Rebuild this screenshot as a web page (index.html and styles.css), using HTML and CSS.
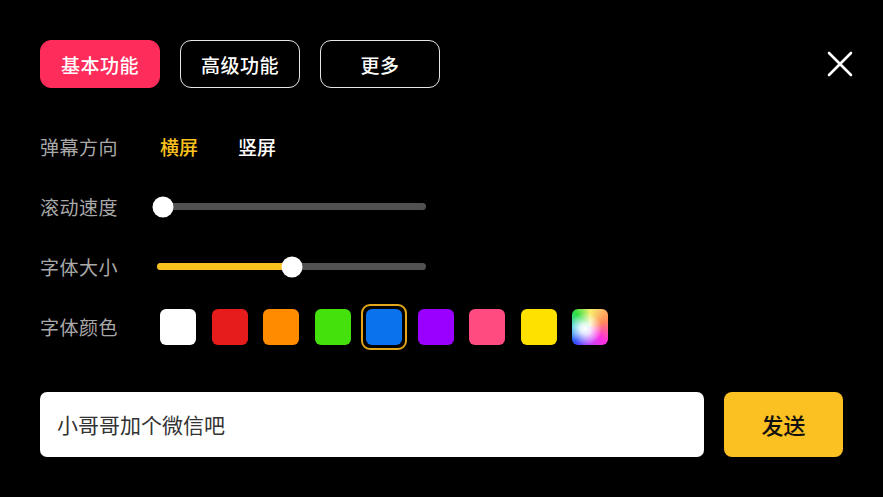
FILE: index.html
```html
<!DOCTYPE html>
<html lang="zh">
<head>
<meta charset="utf-8">
<link rel="stylesheet" href="styles.css">
</head>
<body>
<div class="panel">
  <div class="top">
    <div class="tabs">
      <div class="tab active">基本功能</div>
      <div class="tab">高级功能</div>
      <div class="tab">更多</div>
    </div>
    <svg class="close" width="26" height="26" viewBox="0 0 26 26"><path d="M2 2L24 24M24 2L2 24" stroke="#fff" stroke-width="2.6" stroke-linecap="round"/></svg>
  </div>
  <div class="rows">
    <div class="row">
      <div class="label">弹幕方向</div>
      <div class="opts"><span class="opt on">横屏</span><span class="opt">竖屏</span></div>
    </div>
    <div class="row">
      <div class="label">滚动速度</div>
      <div class="slider"><div class="fill" style="width:6px"></div><div class="thumb" style="left:6px"></div></div>
    </div>
    <div class="row">
      <div class="label">字体大小</div>
      <div class="slider"><div class="fill" style="width:135px"></div><div class="thumb" style="left:135px"></div></div>
    </div>
    <div class="row">
      <div class="label">字体颜色</div>
      <div class="swatches">
        <div class="sw"><div class="c" style="background:#ffffff"></div></div>
        <div class="sw"><div class="c" style="background:#e61b1b"></div></div>
        <div class="sw"><div class="c" style="background:#ff8c00"></div></div>
        <div class="sw"><div class="c" style="background:#44e10d"></div></div>
        <div class="sw sel"><div class="c" style="background:#0a72ec"></div></div>
        <div class="sw"><div class="c" style="background:#9900ff"></div></div>
        <div class="sw"><div class="c" style="background:#ff4b7f"></div></div>
        <div class="sw"><div class="c" style="background:#ffe100"></div></div>
        <div class="sw"><div class="c rainbow"></div></div>
      </div>
    </div>
  </div>
  <div class="bottom">
    <div class="input">小哥哥加个微信吧</div>
    <div class="send">发送</div>
  </div>
</div>
</body>
</html>
```
FILE: styles.css
```css
html, body {
  margin: 0;
  padding: 0;
  background: #000;
}
body {
  width: 883px;
  height: 497px;
  overflow: hidden;
  font-family: "Noto Sans CJK SC", "Noto Sans", sans-serif;
}
.panel {
  padding: 40px 40px 0 40px;
}
.top {
  display: flex;
  justify-content: space-between;
  align-items: center;
  height: 48px;
}
.tabs {
  display: flex;
  gap: 20px;
}
.tab {
  box-sizing: border-box;
  width: 120px;
  height: 48px;
  border: 1.5px solid #e6e6e6;
  border-radius: 11px;
  color: #fff;
  font-size: 19px;
  font-weight: 500;
  display: flex;
  align-items: center;
  justify-content: center;
  letter-spacing: 0.5px;
}
.tab.active {
  background: #fe2c5a;
  border-color: #fe2c5a;
}
.close {
  margin-right: -10px;
  margin-top: -1px;
}
.rows {
  margin-top: 40.5px;
  display: flex;
  flex-direction: column;
  gap: 24px;
}
.row {
  display: flex;
  align-items: center;
  height: 36px;
}
.label {
  width: 117px;
  color: #a9a9a9;
  font-size: 19px;
  letter-spacing: 0.5px;
}
.opts {
  display: flex;
  gap: 40px;
  font-size: 19px;
  font-weight: 500;
  color: #fff;
  margin-left: 3px;
}
.opt.on {
  color: #f9c11d;
}
.slider {
  position: relative;
  width: 269px;
  height: 7px;
  border-radius: 4px;
  background: #515151;
}
.fill {
  height: 7px;
  border-radius: 4px;
  background: #f9c11d;
}
.thumb {
  position: absolute;
  top: 50%;
  width: 21px;
  height: 21px;
  border-radius: 50%;
  background: #fff;
  transform: translate(-50%, -50%);
}
.swatches {
  display: flex;
  gap: 5.5px;
  margin-left: -2px;
}
.sw {
  box-sizing: border-box;
  width: 46px;
  height: 46px;
  border-radius: 9px;
  border: 2px solid transparent;
  display: flex;
  align-items: center;
  justify-content: center;
}
.sw.sel {
  border-color: #e2a81a;
}
.c {
  width: 36px;
  height: 36px;
  border-radius: 6px;
}
.rainbow {
  background:
    radial-gradient(circle at 38% 55%, rgba(255,255,255,1) 0%, rgba(255,255,255,0.85) 18%, rgba(255,255,255,0) 55%),
    conic-gradient(from 0deg at 50% 50%, #f8f070 0deg, #ff8a5a 70deg, #ff30e0 135deg, #c040ff 180deg, #3050ff 225deg, #40d0e0 270deg, #30e040 315deg, #f8f070 360deg);
}
.bottom {
  margin-top: 47px;
  display: flex;
  gap: 20px;
}
.input {
  box-sizing: border-box;
  width: 664px;
  height: 65px;
  border-radius: 7px;
  background: #fff;
  color: #333;
  font-size: 21px;
  padding-left: 17px;
  display: flex;
  align-items: center;
}
.send {
  width: 119px;
  height: 65px;
  border-radius: 8px;
  background: #fbc021;
  color: #111;
  font-size: 22px;
  font-weight: 500;
  display: flex;
  align-items: center;
  justify-content: center;
}
```
